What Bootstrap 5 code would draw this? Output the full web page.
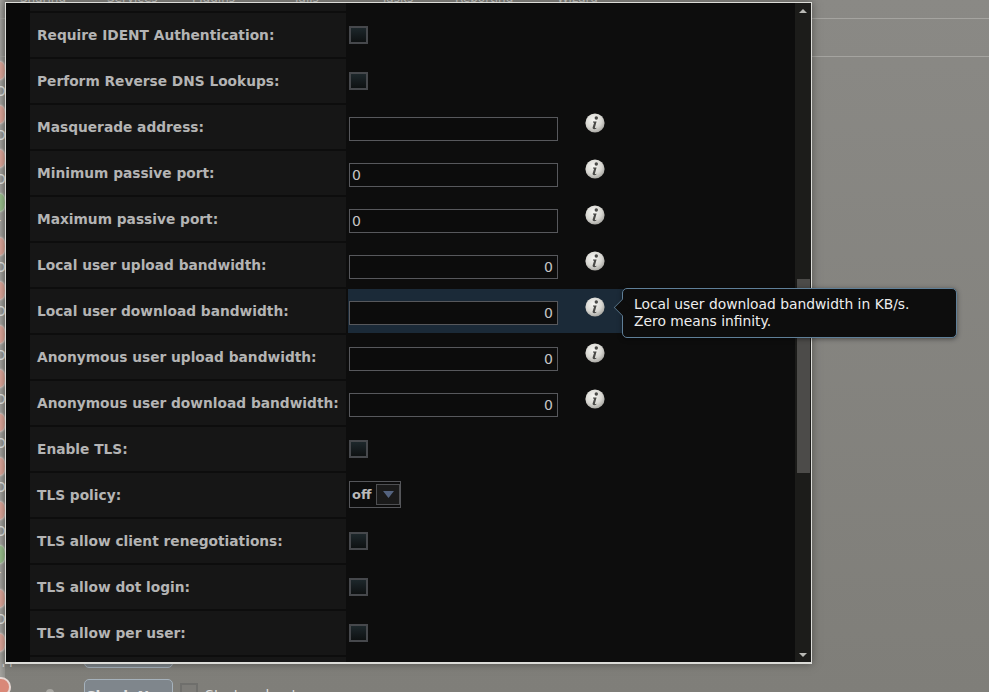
<!DOCTYPE html>
<html lang="en">
<head>
<meta charset="utf-8">
<title>FTP settings</title>
<link href="https://cdn.jsdelivr.net/npm/bootstrap@5.3.0/dist/css/bootstrap.min.css" rel="stylesheet">
<style>
html,body{height:100%;}
body{width:989px;height:692px;overflow:hidden;background:linear-gradient(#8a8985,#7f7e79);font-family:"DejaVu Sans",sans-serif;position:relative;}
.siderail{position:absolute;left:0;top:0;width:5px;height:692px;overflow:hidden;background:linear-gradient(90deg,#a3a29e,#8f8e8a);padding-top:62px;}
.railrow{height:44px;position:relative;color:#e4e4e2;font-size:14px;line-height:17px;}
.railspot{display:block;margin-left:-4px;width:9px;height:17px;border-radius:50%;background:#dda598;box-shadow:0 0 2px 1px #e6d2cc;}
.railrow.okdot .railspot{background:#97bd8a;box-shadow:0 0 2px 1px #c8dcc2;}
.railchar{display:block;margin:4px 0 0 -5px;}
.tabline{height:19px;border-bottom:1px solid #a5a4a0;position:relative;}
.tabline2{height:38px;border-bottom:1px solid #a5a4a0;position:relative;}
.toptabs{position:absolute;top:-9px;left:20px;color:#d5d5d2;font-size:12px;line-height:14px;display:grid;grid-template-columns:87px 85px 103px 86px 74px 102px auto;white-space:nowrap;}
.bottomstrip{position:absolute;left:0;top:664px;right:0;bottom:0;overflow:hidden;}
.btnstub{position:absolute;left:84px;width:89px;height:30px;border:1px solid #a6b2bc;border-radius:5px;background:#7f868c;color:#ddd;font-size:14px;font-weight:700;text-align:center;line-height:33px;}
.stub1{top:-26px;}
.stub2{top:15px;}
.stopped{position:absolute;left:-18px;top:-11px;color:#d6d6d2;font-size:12px;line-height:14px;}
.reddot{position:absolute;left:-9px;top:13px;width:20px;height:20px;border-radius:50%;background:#d98878;border:2px solid #e8d8d4;}
.tinymark{position:absolute;left:46px;top:25px;width:8px;height:8px;border-radius:50%;background:#a8a7a2;}
.bootbox{position:absolute;left:180px;top:19px;width:18px;height:18px;border:2px solid #6f6f6c;background:#7d7c78;}
.boottext{position:absolute;left:205px;top:21px;color:#ddd;font-size:14px;}
.dlgwin{position:absolute;left:5px;top:2px;width:807px;height:662px;background:#0d0d0d;border:1px solid #dcdcd8;border-width:1px 2px 2px 1px;box-shadow:0 0 8px rgba(40,40,38,.55);}
.leftgut{width:24px;background:#090909;flex:none;}
.formcol{width:765px;flex:none;overflow:hidden;}
.cutrow{height:8px;margin-bottom:2px;}
.cutrow .lblcell{height:8px;}
.setrow{height:44px;margin-bottom:2px;}
.lblcell{width:316px;flex:none;background:#161616;color:#b4b4b4;font-weight:700;font-size:13.75px;padding-left:7px;line-height:44px;white-space:nowrap;}
.valcell{width:447px;margin-left:2px;flex:none;padding:0 0 0 1px;}
.valcell.hilite{background:#1b2a38;}
.txtbox.form-control{width:209px;height:24px;padding:2px;margin-top:12px;border:1px solid #57585c;border-radius:0;background:#0c0c0c;color:#c6c6c6;font-size:14px;line-height:18px;font-family:"DejaVu Sans",sans-serif;box-shadow:none;}
.txtbox.numr{text-align:right;padding-right:4px;}
.chk.form-check-input{width:19px;height:18px;margin:13px 0 0;border:2px solid #46484c;border-radius:0;background:linear-gradient(#1d272b,#0e1112);}
.infoicn{display:block;margin:8px 0 0 26px;flex:none;}
.infowrap{width:210px;flex:none;}
.seltop{margin-top:8px;width:52px;height:27px;border:1px solid #55565a;color:#b9b9b9;font-weight:700;font-size:13px;line-height:25px;padding-left:2px;}
.selval{width:24px;flex:none;}
.selbtn{width:25px;height:21px;margin-top:2px;border:1px solid #4e4f52;background:#1a1a1a;}
.scrolltrack{width:16px;flex:none;background:#1c1c1a;}
.scrollup,.scrolldn{width:0;height:0;border-left:4px solid transparent;border-right:4px solid transparent;margin:6px auto 0;}
.scrollup{border-bottom:4px solid #b9b9b5;}
.scrolldn{border-top:4px solid #b9b9b5;margin:0 auto 5px;}
.thumbspace{height:266px;flex:none;}
.thumbbar{height:194px;margin:0 1px 0 2px;background:#4c4b49;flex:none;}
.tipbox{position:absolute;left:622px;top:288px;width:335px;height:50px;background:#0d0d0d;border:1px solid #5f7f98;border-radius:5px;color:#ededed;font-size:13.85px;line-height:17px;padding:7px 11px;box-shadow:0 1px 5px rgba(0,0,0,.45);white-space:nowrap;}
.tiparrow{position:absolute;left:-9px;top:10px;width:17px;height:17px;background:#0d0d0d;border-left:1px solid #5f7f98;border-bottom:1px solid #5f7f98;transform:rotate(45deg) scale(.72);}
</style>
</head>
<body>
<svg width="0" height="0" class="position-absolute">
<defs>
<radialGradient id="ball" cx="42%" cy="35%" r="70%"><stop offset="0" stop-color="#f6f6f3"/><stop offset=".6" stop-color="#d8d7d2"/><stop offset="1" stop-color="#a09f9a"/></radialGradient>
<symbol id="infoi" viewBox="0 0 20 20">
<circle cx="10" cy="10" r="9.6" fill="url(#ball)"/>
<circle cx="11.3" cy="5" r="1.7" fill="#4a4a48"/>
<path d="M8 8.600h3.600L9.900 14.400c-.2.700.3.900 1.600.4l-.2.800c-1.300.700-3.900 1-3.700-1L9.100 9.700 8 9.400z" fill="#4a4a48"/>
</symbol>
</defs>
</svg>

<div class="siderail">
<div class="railrow"><span class="railspot"></span><span class="railchar">O</span></div>
<div class="railrow"><span class="railspot"></span><span class="railchar">O</span></div>
<div class="railrow"><span class="railspot"></span><span class="railchar">O</span></div>
<div class="railrow okdot"><span class="railspot"></span><span class="railchar">r</span></div>
<div class="railrow"><span class="railspot"></span><span class="railchar">O</span></div>
<div class="railrow"><span class="railspot"></span><span class="railchar">O</span></div>
<div class="railrow"><span class="railspot"></span><span class="railchar">O</span></div>
<div class="railrow"><span class="railspot"></span><span class="railchar">O</span></div>
<div class="railrow"><span class="railspot"></span><span class="railchar">O</span></div>
<div class="railrow"><span class="railspot"></span><span class="railchar">O</span></div>
<div class="railrow"><span class="railspot"></span><span class="railchar">O</span></div>
<div class="railrow okdot"><span class="railspot"></span><span class="railchar">r</span></div>
<div class="railrow"><span class="railspot"></span><span class="railchar">O</span></div>
<div class="railrow"><span class="railspot"></span></div>
</div>

<div class="tabline"></div>
<div class="tabline2"></div>
<div class="toptabs"><span>Sharing</span><span>Services</span><span>Plugins</span><span>Jails</span><span>Tasks</span><span>Reporting</span><span>Wizard</span></div>

<div class="bottomstrip">
<span class="stopped">Stopped</span>
<div class="btnstub stub1"></div>
<span class="reddot"></span>
<span class="tinymark"></span>
<div class="btnstub stub2">Check Now</div>
<span class="bootbox"></span>
<span class="boottext">Start on boot</span>
</div>

<div class="dlgwin d-flex">
<div class="leftgut"></div>
<div class="formcol">
<div class="cutrow d-flex"><div class="lblcell"></div></div>

<div class="setrow d-flex"><div class="lblcell">Require IDENT Authentication:</div><div class="valcell"><input class="chk form-check-input" type="checkbox" aria-label="Require IDENT Authentication"></div></div>
<div class="setrow d-flex"><div class="lblcell">Perform Reverse DNS Lookups:</div><div class="valcell"><input class="chk form-check-input" type="checkbox" aria-label="Perform Reverse DNS Lookups"></div></div>
<div class="setrow d-flex"><div class="lblcell">Masquerade address:</div><div class="valcell d-flex"><div class="infowrap"><input class="txtbox form-control" type="text" aria-label="Masquerade address"></div><svg class="infoicn" width="20" height="20"><use href="#infoi"/></svg></div></div>
<div class="setrow d-flex"><div class="lblcell">Minimum passive port:</div><div class="valcell d-flex"><div class="infowrap"><input class="txtbox form-control" type="text" value="0" aria-label="Minimum passive port"></div><svg class="infoicn" width="20" height="20"><use href="#infoi"/></svg></div></div>
<div class="setrow d-flex"><div class="lblcell">Maximum passive port:</div><div class="valcell d-flex"><div class="infowrap"><input class="txtbox form-control" type="text" value="0" aria-label="Maximum passive port"></div><svg class="infoicn" width="20" height="20"><use href="#infoi"/></svg></div></div>
<div class="setrow d-flex"><div class="lblcell">Local user upload bandwidth:</div><div class="valcell d-flex"><div class="infowrap"><input class="txtbox numr form-control" type="text" value="0" aria-label="Local user upload bandwidth"></div><svg class="infoicn" width="20" height="20"><use href="#infoi"/></svg></div></div>
<div class="setrow d-flex"><div class="lblcell">Local user download bandwidth:</div><div class="valcell hilite d-flex"><div class="infowrap"><input class="txtbox numr form-control" type="text" value="0" aria-label="Local user download bandwidth"></div><svg class="infoicn" width="20" height="20"><use href="#infoi"/></svg></div></div>
<div class="setrow d-flex"><div class="lblcell">Anonymous user upload bandwidth:</div><div class="valcell d-flex"><div class="infowrap"><input class="txtbox numr form-control" type="text" value="0" aria-label="Anonymous user upload bandwidth"></div><svg class="infoicn" width="20" height="20"><use href="#infoi"/></svg></div></div>
<div class="setrow d-flex"><div class="lblcell">Anonymous user download bandwidth:</div><div class="valcell d-flex"><div class="infowrap"><input class="txtbox numr form-control" type="text" value="0" aria-label="Anonymous user download bandwidth"></div><svg class="infoicn" width="20" height="20"><use href="#infoi"/></svg></div></div>
<div class="setrow d-flex"><div class="lblcell">Enable TLS:</div><div class="valcell"><input class="chk form-check-input" type="checkbox" aria-label="Enable TLS"></div></div>
<div class="setrow d-flex"><div class="lblcell">TLS policy:</div><div class="valcell"><div class="seltop d-flex"><span class="selval">off</span><span class="selbtn d-flex align-items-center justify-content-center"><svg width="11" height="7"><path d="M0 0h11L5.500 7z" fill="#54637f"/></svg></span></div></div></div>
<div class="setrow d-flex"><div class="lblcell">TLS allow client renegotiations:</div><div class="valcell"><input class="chk form-check-input" type="checkbox" aria-label="TLS allow client renegotiations"></div></div>
<div class="setrow d-flex"><div class="lblcell">TLS allow dot login:</div><div class="valcell"><input class="chk form-check-input" type="checkbox" aria-label="TLS allow dot login"></div></div>
<div class="setrow d-flex"><div class="lblcell">TLS allow per user:</div><div class="valcell"><input class="chk form-check-input" type="checkbox" aria-label="TLS allow per user"></div></div>
<div class="setrow d-flex"><div class="lblcell"></div></div>
</div>
<div class="scrolltrack d-flex flex-column">
<div class="scrollup"></div>
<div class="thumbspace"></div>
<div class="thumbbar"></div>
<div class="flex-grow-1"></div>
<div class="scrolldn"></div>
</div>
</div>

<div class="tipbox"><span class="tiparrow"></span>Local user download bandwidth in KB/s.<br>Zero means infinity.</div>

</body>
</html>
